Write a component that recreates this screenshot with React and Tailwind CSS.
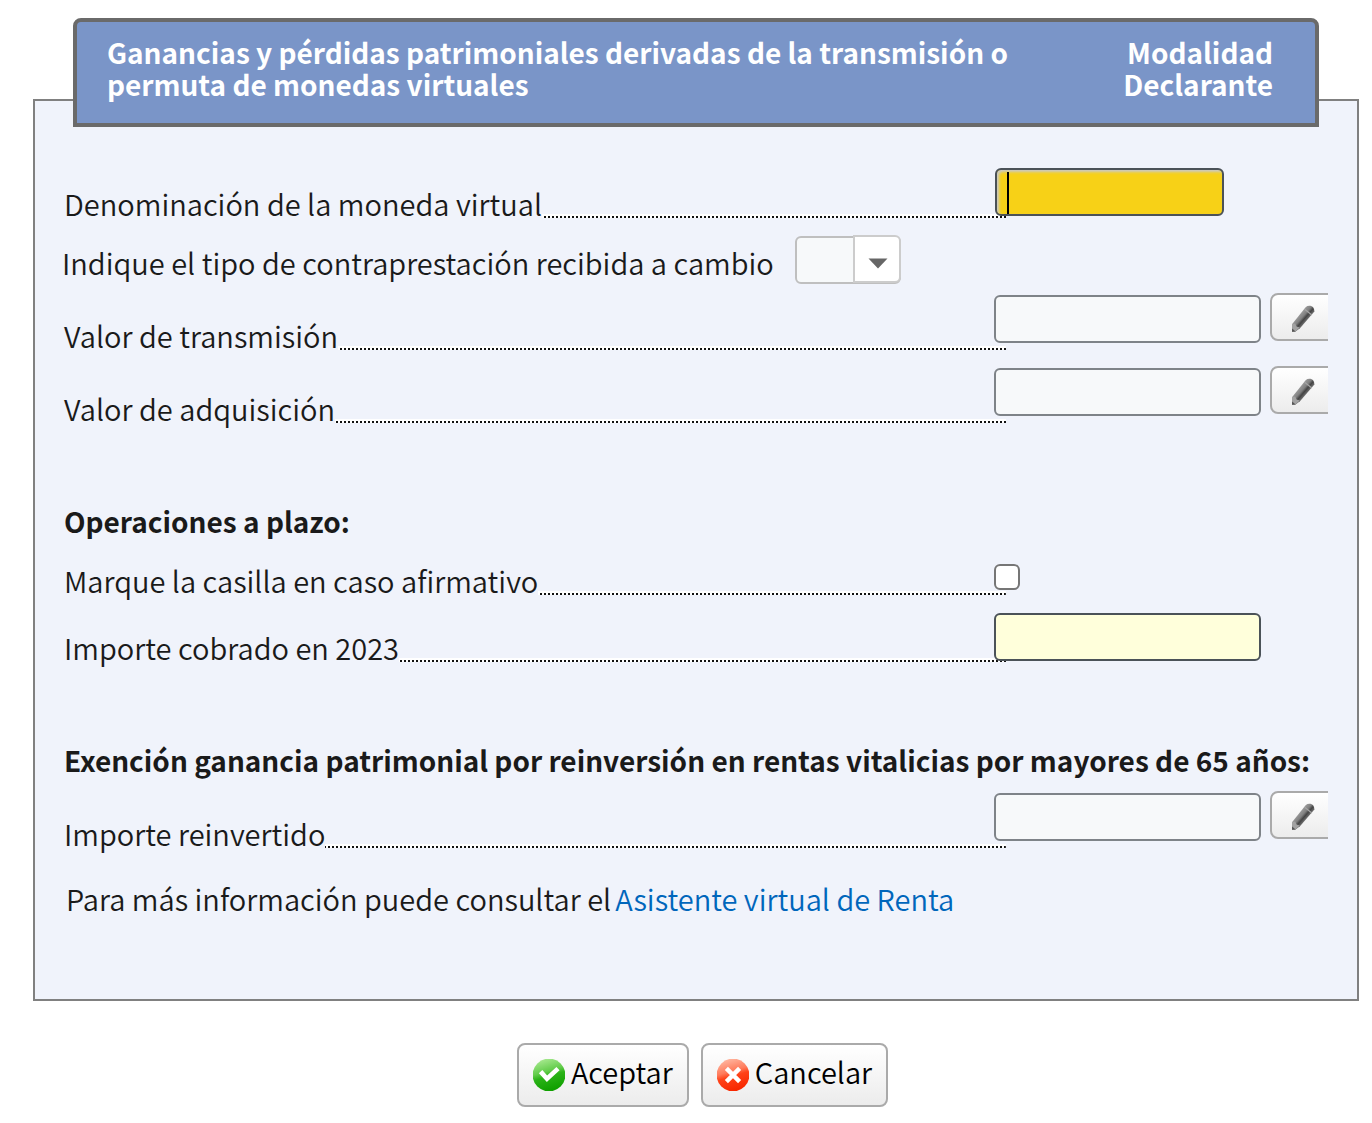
import { useId } from "react";

function FieldRow({ label, id, className = "", fieldClass = "", children }) {
  return (
    <div className={`flex items-end ${className}`}>
      <label htmlFor={id} className="-mb-px whitespace-nowrap leading-8">{label}</label>
      <span className="h-1 min-w-0 flex-1 bg-white bg-[repeating-linear-gradient(270deg,#111_0_2px,#fff_2px_4px)] bg-[length:100%_2px] bg-bottom bg-no-repeat" />
      <div className={`-ml-3 flex w-[334px] shrink-0 items-start overflow-hidden ${fieldClass}`}>{children}</div>
    </div>
  );
}

function PencilIcon() {
  const id = useId();
  return (
    <svg width="24" height="28" viewBox="0 0 24 28" className="mt-1" aria-hidden="true">
      <defs>
        <linearGradient id={id} gradientUnits="userSpaceOnUse" x1="8" y1="10" x2="15.5" y2="16.5">
          <stop offset="0" stopColor="#9a9a9a" />
          <stop offset="0.4" stopColor="#808080" />
          <stop offset="0.65" stopColor="#444" />
          <stop offset="1" stopColor="#777" />
        </linearGradient>
      </defs>
      <path d="M1 26.6 1.2 19 14.6 2.2Q16.5 .4 19.5 .8 23.4 2 23.4 6.6L9 23.2 4.5 26.6Z" fill={`url(#${id})`} />
      <path d="M1 26.6 1.2 19 4.2 18.5 5.6 21.6 8.8 22.6 4.5 26.6Z" fill="#a2a2a2" />
      <path d="M1 26.8 1.1 23.5 4.6 26.6Z" fill="#555" />
      <path d="M13.6 4.2 20.8 10" stroke="#a5a5a5" strokeWidth="1.2" />
    </svg>
  );
}

function AmountRow({ label, className }) {
  const id = useId();
  return (
    <FieldRow label={label} id={id} className={className} fieldClass="mb-[7px]">
      <input id={id} type="text" className="mt-0.5 h-12 w-[267px] shrink-0 rounded-md border-2 border-[#7e8388] bg-[#f7f9fa] px-2" />
      <button
        type="button"
        aria-label={`Editar ${label}`}
        className="ml-[9px] flex h-12 w-[66px] shrink-0 items-center justify-center rounded-lg border-2 border-[#aaa] bg-linear-to-b from-white to-[#ececec]"
      >
        <PencilIcon />
      </button>
    </FieldRow>
  );
}

function AcceptIcon() {
  return (
    <svg width="32" height="32" viewBox="0 0 32 32" aria-hidden="true">
      <defs>
        <linearGradient id="ok" x1="0.1" y1="0" x2="0.4" y2="1">
          <stop offset="0" stopColor="#b4ee9c" />
          <stop offset="0.45" stopColor="#62cc4a" />
          <stop offset="0.6" stopColor="#2bb318" />
          <stop offset="1" stopColor="#10a000" />
        </linearGradient>
      </defs>
      <circle cx="16" cy="16" r="16.4" fill="url(#ok)" />
      <path d="M7.6 12.6 14 19.8 25 9.6" fill="none" stroke="#fff" strokeWidth="4.6" />
    </svg>
  );
}

function CancelIcon() {
  return (
    <svg width="32" height="32" viewBox="0 0 32 32" aria-hidden="true">
      <defs>
        <linearGradient id="no" x1="0.1" y1="0" x2="0.4" y2="1">
          <stop offset="0" stopColor="#ffc2ae" />
          <stop offset="0.45" stopColor="#ff7a5a" />
          <stop offset="0.6" stopColor="#ff4218" />
          <stop offset="1" stopColor="#f82800" />
        </linearGradient>
      </defs>
      <circle cx="16" cy="16" r="16.4" fill="url(#no)" />
      <path d="M9.4 9.4 22.6 22.6M22.6 9.4 9.4 22.6" fill="none" stroke="#fff" strokeWidth="4.4" />
    </svg>
  );
}

function ActionButton({ icon, children }) {
  return (
    <button
      type="button"
      className="flex h-16 items-center gap-1.5 rounded-lg border-2 border-[#aaa] bg-linear-to-b from-white to-[#ececec] px-3.5 text-black"
    >
      {icon}
      <span className="-mt-2 leading-8">{children}</span>
    </button>
  );
}

export default function App() {
  return (
    <main className="min-h-screen bg-white pt-[18px] pr-[13px] pb-4 pl-[33px] font-['Noto_Sans_CJK_SC','Noto_Sans',sans-serif] text-[29px] font-[350] text-[#1a1a1a]">
      <form onSubmit={(e) => e.preventDefault()}>
        <section className="mt-[81px] border-2 border-[#808080] bg-[#f0f3fb] pb-[85px]">
          <header className="mx-[38px] -mt-[83px] flex items-start justify-between rounded-t-lg border-4 border-[#6a6a6a] bg-[#7a95c8] pt-3.5 pr-[42px] pb-[23px] pl-[30px] text-[28px] leading-8 font-bold text-white">
            <h1 className="max-w-[930px]">
              Ganancias y pérdidas patrimoniales derivadas de la transmisión o permuta de monedas virtuales
            </h1>
            <p className="w-40 text-right">Modalidad Declarante</p>
          </header>

          <div className="flex flex-col pt-[41px] pr-[29px] pl-[29px]">
            <FieldRow label="Denominación de la moneda virtual" id="moneda" fieldClass="mb-0.5">
              <div className="relative ml-px">
                <input
                  id="moneda"
                  type="text"
                  autoFocus
                  className="block h-12 w-[229px] rounded-md border-2 border-[#4b5258] bg-[#f7d117] px-2.5 caret-transparent shadow-[inset_2px_2px_3px_#c9c9c9] outline-none"
                />
                <span className="pointer-events-none absolute top-1 left-3 h-[42px] w-0.5 bg-black" />
              </div>
            </FieldRow>

            <div className="mt-[17px] flex items-center gap-[21px]">
              <label htmlFor="tipo" className="mt-1 -ml-0.5 leading-8">Indique el tipo de contraprestación recibida a cambio</label>
              <div className="relative mt-px h-12 w-[106px]">
                <select id="tipo" className="h-12 w-full appearance-none rounded-md border-2 border-[#bfbfbf] bg-[#f7f9fa] px-2">
                  <option value=""></option>
                </select>
                <span className="pointer-events-none absolute -top-px right-0 flex h-12 w-12 items-center justify-center rounded-r-md border-2 border-[#ccc] bg-white pl-0.5">
                  <svg width="20" height="11" viewBox="0 0 20 11" className="mt-2" aria-hidden="true">
                    <path d="M.5 .5H19.5L10 10.5Z" fill="#666" />
                  </svg>
                </span>
              </div>
            </div>

            <AmountRow label="Valor de transmisión" className="mt-[9px]" />
            <AmountRow label="Valor de adquisición" className="mt-4" />

            <h2 className="mt-[82px] text-[28px] leading-8 font-bold">Operaciones a plazo:</h2>
            <FieldRow label="Marque la casilla en caso afirmativo" id="casilla" className="mt-[27px]" fieldClass="mb-[5px]">
              <input id="casilla" type="checkbox" className="h-[26px] w-[26px] appearance-none rounded-md border-2 border-[#767676] bg-white" />
            </FieldRow>
            <FieldRow label="Importe cobrado en 2023" id="cobrado" className="mt-[18px]" fieldClass="mb-px">
              <input id="cobrado" type="text" className="h-12 w-[267px] rounded-md border-2 border-[#4b5258] bg-[#ffffdb] px-2" />
            </FieldRow>

            <h2 className="mt-[82px] text-[28px] leading-8 font-bold whitespace-nowrap">
              Exención ganancia patrimonial por reinversión en rentas vitalicias por mayores de 65 años:
            </h2>
            <AmountRow label="Importe reinvertido" className="mt-[15px]" />

            <p className="mt-[34px] ml-0.5 flex gap-1 leading-8">
              <span>Para más información puede consultar el</span>
              <a href="#asistente" className="text-[#0066bb]">Asistente virtual de Renta</a>
            </p>
          </div>
        </section>

        <div className="mt-[42px] ml-[13px] flex justify-center gap-3">
          <ActionButton icon={<AcceptIcon />}>Aceptar</ActionButton>
          <ActionButton icon={<CancelIcon />}>Cancelar</ActionButton>
        </div>
      </form>
    </main>
  );
}
